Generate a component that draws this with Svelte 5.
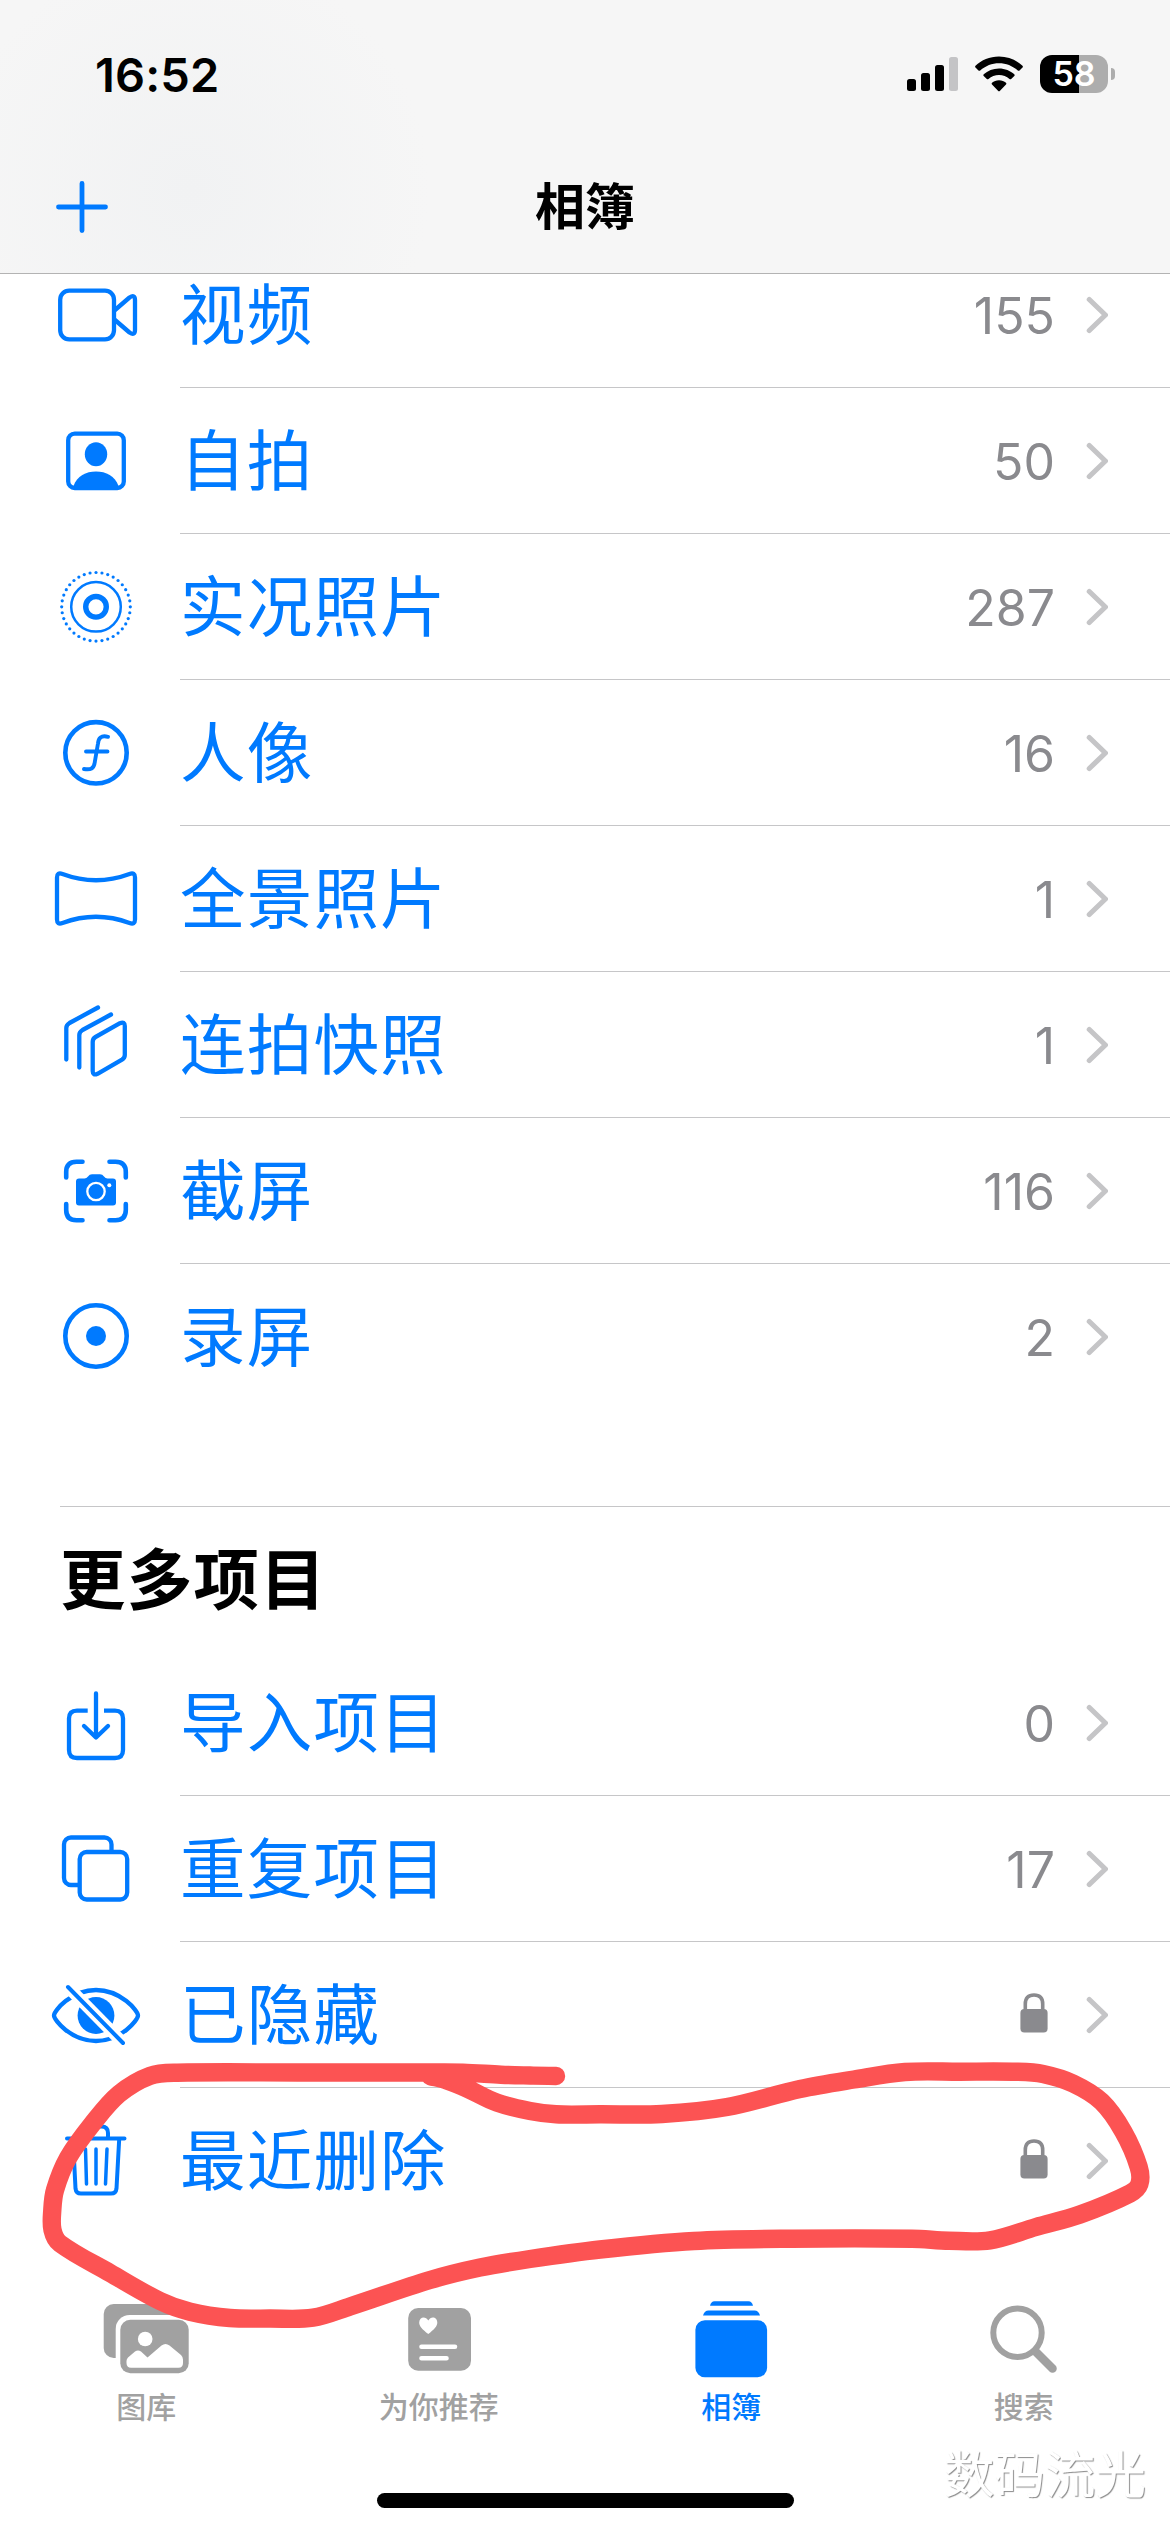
<script>
  const media = [
    { icon: 'video', label: '视频', count: 155 },
    { icon: 'selfie', label: '自拍', count: 50 },
    { icon: 'live', label: '实况照片', count: 287 },
    { icon: 'portrait', label: '人像', count: 16 },
    { icon: 'pano', label: '全景照片', count: 1 },
    { icon: 'burst', label: '连拍快照', count: 1 },
    { icon: 'screenshot', label: '截屏', count: 116 },
    { icon: 'recording', label: '录屏', count: 2 }
  ];
  const more = [
    { icon: 'import', label: '导入项目', count: 0 },
    { icon: 'duplicate', label: '重复项目', count: 17 },
    { icon: 'hidden', label: '已隐藏', locked: true },
    { icon: 'trash', label: '最近删除', locked: true }
  ];
  const tabs = [
    { icon: 'library', label: '图库' },
    { icon: 'foryou', label: '为你推荐' },
    { icon: 'albums', label: '相簿', active: true },
    { icon: 'search', label: '搜索' }
  ];

  const dots = Array.from({ length: 36 }, (_, i) => {
    const a = (i * Math.PI) / 18;
    return [34.3 * Math.cos(a), 0.8 + 34.3 * Math.sin(a)];
  });

  // Freehand marker stroke, smoothed with a Catmull-Rom spline.
  const stroke = [
    [556, 2076], [530, 2075.5], [501, 2074.7], [463, 2072.6], [420, 2072.5], [300, 2072.5],
    [177, 2072.7], [150, 2075.8], [119, 2094], [93, 2123], [68, 2158], [55, 2190],
    [52.3, 2210], [52.5, 2230], [60, 2243.500], [110, 2273], [160, 2301], [190, 2311.700],
    [230, 2318], [270, 2318.500], [313, 2317.700], [350, 2306.500], [430, 2280], [480, 2267.500],
    [530, 2259], [600, 2249.5], [694, 2241], [792, 2238.7],
    [912, 2238.7], [949, 2240.7], [990, 2240.3], [1036, 2227], [1080, 2214.5], [1130, 2193.5],
    [1139.4, 2184], [1138.7, 2167], [1123.4, 2131.7], [1101.6, 2101.7], [1073, 2083.5],
    [1043, 2074], [1018, 2071.8], [960, 2071.7], [905, 2072], [854, 2079.5], [800, 2089],
    [727, 2107], [662, 2114], [600, 2114.3], [556, 2114.3], [530, 2111], [497, 2102.700],
    [467, 2088.500], [447, 2080.500], [430, 2076]
  ];
  function spline(p) {
    let d = `M${p[0]}`;
    for (let i = 0; i < p.length - 1; i++) {
      const a = p[i - 1] ?? p[i], b = p[i], c = p[i + 1], e = p[i + 2] ?? c;
      const len = Math.hypot(c[0] - b[0], c[1] - b[1]);
      const tan = (u, v) => {
        const n = Math.hypot(v[0] - u[0], v[1] - u[1]) || 1;
        return [((v[0] - u[0]) / n) * (len / 3), ((v[1] - u[1]) / n) * (len / 3)];
      };
      const t1 = tan(a, c), t2 = tan(b, e);
      d += `C${b[0] + t1[0]} ${b[1] + t1[1]} ${c[0] - t2[0]} ${c[1] - t2[1]} ${c[0]} ${c[1]}`;
    }
    return d;
  }
</script>

{#snippet rowIcon(name)}
  <svg class="icon" viewBox="-48 -48 96 96">
    {#if name === 'video'}
      <rect x="-35.8" y="-23.3" width="53.8" height="48.6" rx="9" />
      <path d="M19-4L33.5-16.5Q39-20 39-14V16Q39 22 33.5 18.5L19 6" />
    {:else if name === 'selfie'}
      <rect x="-27.8" y="-26.3" width="55.6" height="54.3" rx="6.5" />
      <ellipse class="solid" cx="0" cy="-5.8" rx="11.2" ry="12" />
      <path class="solid" d="M-22.5 26C-19 16-10 11.5 0 11.5S19 16 22.5 26L21 29H-21Z" />
    {:else if name === 'live'}
      {#each dots as [x, y]}<circle class="solid" cx={x} cy={y} r="1.6" />{/each}
      <circle cx="0" cy="0.8" r="24.8" stroke-width="2.5" />
      <circle cx="0" cy="0.8" r="10.3" stroke-width="5.4" />
    {:else if name === 'portrait'}
      <circle cx="0" cy="0.8" r="30.7" stroke-width="4.6" />
      <path d="M12-15.2C5-17 2.4-14 1.9-8L-1.2 10C-2 17-5.5 18-12 17M-10-.5H11.5" stroke-width="3.9" />
    {:else if name === 'pano'}
      <path d="M-39-20.5Q-39-26-33.5-24Q0-11.5 33.5-24Q39-26 39-20.5V21.5Q39 27 33.5 25Q0 12.5-33.5 25Q-39 27-39 21.5Z" />
    {:else if name === 'burst'}
      <path d="M2-36.5L-26.5-21Q-29.7-19-29.7-16V15.5M15-29.5L-13.5-14Q-16.7-12-16.7-9V23.5" />
      <path d="M-3.3-2Q-3.3-5.5-.5-7L24-20.8Q28.8-23 28.8-18V11Q28.8 14 26 15.7L1.5 29.8Q-3.3 32-3.3 27Z" />
    {:else if name === 'screenshot'}
      <path stroke-width="4.6" d="M-29.8-12.5V-18Q-29.8-28.3-19.5-28.3H-13.5M13.5-28.3H19.5Q29.8-28.3 29.8-18V-12.5M29.8 14V20Q29.8 30.2 19.5 30.2H13.5M-13.5 30.2H-19.5Q-29.8 30.2-29.8 20V14" />
      <path class="solid" d="M-17-11.5H-11.5Q-9.5-11.5-8-13.5Q-6.5-15.8-4-15.8H4Q6.5-15.8 8-13.5Q9.5-11.5 11.5-11.5H17Q20-11.5 20-8.5V12.5Q20 15.5 17 15.5H-17Q-20 15.5-20 12.5V-8.5Q-20-11.5-17-11.5Z" />
      <circle class="cut" cx="0" cy="1.5" r="8.7" stroke-width="2.3" />
      <circle class="paper" cx="13.3" cy="-4.8" r="2" />
    {:else if name === 'recording'}
      <circle cx="0" cy="0" r="30.7" stroke-width="4.6" />
      <circle class="solid" cx="0" cy="0" r="10" />
    {:else if name === 'import'}
      <path stroke-linecap="butt" d="M-8.3-11.4H-19Q-27-11.4-27-3.4V28Q-27 36-19 36H19Q27 36 27 28V-3.4Q27-11.4 19-11.4H8" />
      <path d="M0-28.5V15M-12 4L0 15.5L12 4" />
    {:else if name === 'duplicate'}
      <rect x="-32" y="-30.5" width="47.5" height="47.5" rx="7" />
      <rect class="cover" x="-16.3" y="-16" width="47.5" height="47.5" rx="7" />
    {:else if name === 'hidden'}
      <path d="M-42 1.5C-42-3-25-24 0-24S42-3 42 1.5S25 27 0 27S-42 6-42 1.5Z" />
      <circle class="solid" cx="0" cy="1.5" r="18.4" />
      <path class="cut" stroke-width="12" stroke-linecap="butt" d="M-30-29L30 32" />
      <path stroke-width="4" d="M-28-27L27 29" />
    {:else if name === 'trash'}
      <path stroke-width="4" d="M-29-21.5H28.5M-23-21L-20.5 28.5Q-20 33.5-15 33.5H15Q20 33.5 20.5 28.5L23.2-21M-12-22V-27Q-12-33.5-5.5-33.5H5.5Q12-33.5 12-27V-22" />
      <path stroke-width="3.5" d="M-10.5-11L-9.5 24M0-11V24M11-11L9.5 24" />
    {/if}
  </svg>
{/snippet}

{#snippet row(item)}
  <li class="row">
    {@render rowIcon(item.icon)}
    <div class="body">
      <span class="label">{item.label}</span>
      {#if item.locked}
        <svg class="lock" viewBox="0 0 28 40">
          <rect x="0.4" y="16" width="27.2" height="23.5" rx="4" />
          <path d="M5.3 17V11Q5.3 2 14 2T22.7 11V17" />
        </svg>
      {:else}
        <span class="count">{item.count}</span>
      {/if}
      <svg class="chevron" viewBox="0 0 22 38"><path d="M3.3 3.5L19.4 19L3.3 34.5" /></svg>
    </div>
  </li>
{/snippet}

<div class="screen">
  <header>
    <div class="status">
      <span class="time">16:52</span>
      <div class="indicators">
        <svg class="signal" viewBox="0 0 51 36">
          <rect x="0" y="23" width="9" height="12" rx="2.5" />
          <rect x="14" y="17" width="9" height="18" rx="2.5" />
          <rect x="28" y="9" width="9" height="26" rx="2.5" />
          <rect class="faint" x="42" y="1" width="9" height="34" rx="2.5" />
        </svg>
        <svg class="wifi" viewBox="0 0 48 36">
          <path d="M24 .5C33.5 .5 41.5 4 47.5 9.8Q48.3 10.7 47.5 11.6L44.5 14.5Q43.7 15.2 42.8 14.5C37.5 9.7 31 7.2 24 7.2S10.5 9.7 5.2 14.5Q4.3 15.2 3.5 14.5L.5 11.6Q-.3 10.7 .5 9.8C6.5 4 14.5 .5 24 .5Z" />
          <path d="M24 12.4C30 12.4 35.3 14.7 39.3 18.3Q40.2 19.2 39.3 20L36.2 23Q35.4 23.7 34.5 23C31.6 20.5 28 19.1 24 19.1S16.4 20.5 13.5 23Q12.6 23.7 11.8 23L8.7 20Q7.8 19.2 8.7 18.3C12.7 14.7 18 12.4 24 12.4Z" />
          <path d="M24 24.2C26.8 24.2 29.2 25.2 31 26.8Q31.9 27.7 31 28.6L25 34.7Q24 35.7 23 34.7L17 28.6Q16.1 27.7 17 26.8C18.8 25.2 21.2 24.2 24 24.2Z" />
        </svg>
        <div class="battery"><div class="cell">58</div><i class="nub"></i></div>
      </div>
    </div>
    <nav>
      <svg class="plus" viewBox="0 0 52 52"><path d="M26 2.5V49.5M2.5 26H49.5" /></svg>
      <h1>相簿</h1>
      <span></span>
    </nav>
  </header>

  <main>
    <ul>{#each media as item}{@render row(item)}{/each}</ul>
    <section>
      <h2>更多项目</h2>
      <ul>{#each more as item}{@render row(item)}{/each}</ul>
    </section>
  </main>

  <footer>
    {#each tabs as tab}
      <div class="tab" class:active={tab.active}>
        <svg viewBox="0 0 90 84">
          {#if tab.icon === 'library'}
            <rect x="2.7" y="6" width="69" height="54" rx="10" />
            <rect class="paper" x="14.7" y="17" width="78" height="64" rx="14" />
            <rect x="19.3" y="21.7" width="68.4" height="53.6" rx="10" />
            <circle class="paper" cx="44.2" cy="41" r="7.3" />
            <path class="paper" d="M25.5 63Q25.5 61 27 59.5L34 53.5Q37 51.5 40 53.5L46.5 59.5L60.5 47.5Q64.5 44.5 68.5 47.5L80 57Q82 59 82 61.5V65Q82 69.7 77.5 69.7H30Q25.5 69.7 25.5 65Z" />
          {:else if tab.icon === 'foryou'}
            <rect x="14.2" y="10" width="62.8" height="62.7" rx="10" />
            <path class="paper" d="M34.3 36C28.5 31.5 25.2 28.5 25.2 24.5C25.2 19 31.5 17.5 34.3 22.5C37 17.5 43.3 19 43.3 24.5C43.3 28.5 40 31.5 34.3 36Z" />
            <path class="rule" d="M27.5 48.7H61M27.5 60.2H52.5" />
          {:else if tab.icon === 'albums'}
            <path d="M24 7.8Q25 3.3 28.5 3.3H62.5Q66 3.3 67 7.8ZM17 17.4Q18.5 12.6 22.5 12.6H68.5Q72.5 12.6 74 17.4Z" />
            <rect x="9.4" y="22.3" width="71.7" height="57" rx="9.5" />
          {:else}
            <circle class="ring" cx="38.5" cy="34.8" r="24.2" />
            <path class="handle" d="M57 54L73.5 70.5" />
          {/if}
        </svg>
        <span>{tab.label}</span>
      </div>
    {/each}
  </footer>
  <div class="home"></div>

  <svg class="marker" viewBox="0 0 1170 2532"><path d={spline(stroke)} /></svg>
  <div class="watermark">数码流光</div>
</div>

<style>
  :global(body) { margin: 0; background: #fff; }
  .screen {
    position: relative;
    display: flex;
    flex-direction: column;
    width: 1170px;
    height: 2532px;
    overflow: hidden;
    background: #fff;
    font-family: Inter, "Noto Sans CJK SC", sans-serif;
  }
  header {
    position: relative;
    z-index: 1;
    box-sizing: border-box;
    flex: none;
    height: 274px;
    border-bottom: 1px solid #b3b3b3;
    background: radial-gradient(circle at 190px 190px, #f1f2f3, #f6f6f6 240px);
  }
  .status {
    display: flex;
    justify-content: space-between;
    align-items: center;
    height: 148px;
    padding: 0 55px 0 95px;
  }
  .time { font-size: 47px; font-weight: 600; letter-spacing: 0.1px; }
  .indicators { display: flex; align-items: center; }
  .signal { width: 51px; height: 36px; }
  .faint { fill: #c4c4c6; }
  .wifi { width: 48px; height: 36px; margin: 0 17px; }
  .battery { display: flex; align-items: center; gap: 3px; }
  .cell {
    width: 68px;
    height: 38px;
    border-radius: 12px;
    background: linear-gradient(90deg, #000 39px, #adadad 39px);
    color: #fff;
    font-size: 34px;
    font-weight: 600;
    line-height: 38px;
    text-align: center;
  }
  .nub { width: 4px; height: 12px; border-radius: 0 4px 4px 0; background: #adadad; }
  nav {
    display: grid;
    grid-template-columns: 1fr auto 1fr;
    align-items: center;
    height: 118px;
    padding: 0 56px;
  }
  .plus { width: 52px; height: 52px; fill: none; stroke: #007aff; stroke-width: 4.8; stroke-linecap: round; }
  h1 { margin: 0; font-size: 50px; font-weight: 600; line-height: 60px; }
  main { flex: none; height: 1992px; margin-top: -32px; }
  ul { margin: 0; padding: 0; list-style: none; }
  .row { display: flex; align-items: stretch; height: 146px; padding-left: 48px; }
  .icon {
    flex: none;
    width: 96px;
    height: 96px;
    margin: 24px 36px 0 0;
    overflow: visible;
    fill: none;
    stroke: #007aff;
    stroke-width: 4.3;
    stroke-linecap: round;
    stroke-linejoin: round;
  }
  .icon .solid { fill: #007aff; stroke: none; }
  .icon .cut { stroke: #fff; }
  .icon .paper { fill: #fff; stroke: none; }
  .icon .cover { fill: #fff; }
  .body {
    display: flex;
    flex: 1;
    align-items: center;
    box-sizing: border-box;
    padding: 0 62px 0 0;
    border-bottom: 1px solid #c6c6c8;
  }
  .row:last-child .body { border-color: transparent; }
  .label { flex: 1; padding-top: 2px; color: #007aff; font-size: 65.5px; letter-spacing: 1.2px; line-height: 90px; }
  .count { margin-right: 31px; padding-top: 2px; color: #8a8a8e; font-size: 50px; }
  .lock { width: 28px; height: 40px; margin: -4px 38px 0 0; fill: #8a8a8e; }
  .lock path { fill: none; stroke: #8a8a8e; stroke-width: 3.6; }
  .chevron { width: 22px; height: 38px; fill: none; stroke: #c5c5c7; stroke-width: 5.2; stroke-linecap: round; stroke-linejoin: round; }
  section { margin-top: 96px; }
  h2 {
    box-sizing: border-box;
    height: 144px;
    margin: 0 0 0 60px;
    border-top: 1px solid #c6c6c8;
    font-size: 65.5px;
    font-weight: 600;
    letter-spacing: 1.2px;
    line-height: 147px;
  }
  footer { display: grid; grid-template-columns: repeat(4, 1fr); height: 259px; padding-top: 64px; box-sizing: border-box; }
  .tab { display: flex; flex-direction: column; align-items: center; color: #a1a1a1; font-size: 30px; font-weight: 500; line-height: 44px; }
  .tab svg { width: 90px; height: 84px; margin-bottom: 3px; fill: currentColor; }
  .tab.active { color: #007aff; }
  .tab .paper { fill: #fff; }
  .rule { stroke: #fff; stroke-width: 4.6; stroke-linecap: round; }
  .tab .ring { fill: none; stroke: currentColor; stroke-width: 6; }
  .handle { stroke: currentColor; stroke-width: 8.5; stroke-linecap: round; }
  .home { flex: none; align-self: center; width: 417px; height: 15px; border-radius: 8px; background: #000; }
  .marker {
    position: absolute;
    inset: 0;
    width: 1170px;
    height: 2532px;
    fill: none;
    stroke: #fc5353;
    stroke-width: 18.4;
    stroke-linecap: round;
    stroke-linejoin: round;
  }
  .watermark {
    position: absolute;
    right: 24px;
    bottom: 24px;
    color: #fff;
    font-size: 50.5px;
    line-height: 66px;
    text-shadow: 1px 1px 1px #8c8c8c;
  }
</style>
